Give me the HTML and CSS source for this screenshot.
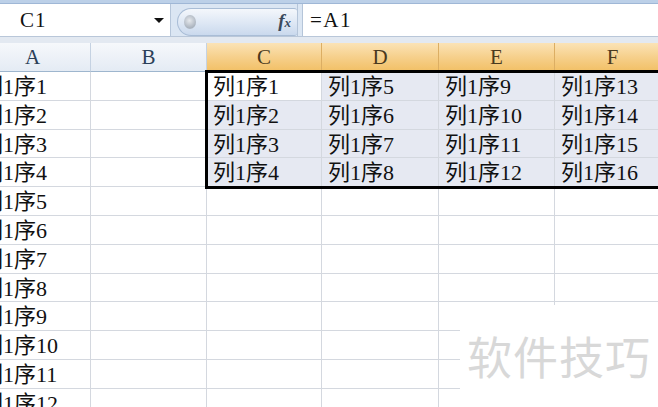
FILE: index.html
```html
<!DOCTYPE html>
<html>
<head>
<meta charset="utf-8">
<link rel="stylesheet" href="styles.css">
</head>
<body>
<div class="app">
  <div class="topstrip"></div>
  <div class="fbar">
    <div class="namebox"><span class="ref">C1</span><span class="arrow"></span></div>
    <div class="caps"><span class="knob"></span><span class="fx">f<span class="x">x</span></span></div>
    <div class="sep"></div>
    <div class="formula">=A1</div>
  </div>
  <div class="band"></div>
  <div class="main">
    <div class="sheet">
      <div class="hdr">A</div><div class="hdr">B</div><div class="hdr sel">C</div><div class="hdr sel">D</div><div class="hdr sel">E</div><div class="hdr sel">F</div>

      <div class="c">列1序1</div><div class="c"></div><div class="c act">列1序1</div><div class="c s">列1序5</div><div class="c s">列1序9</div><div class="c s">列1序13</div>
      <div class="c">列1序2</div><div class="c"></div><div class="c s">列1序2</div><div class="c s">列1序6</div><div class="c s">列1序10</div><div class="c s">列1序14</div>
      <div class="c">列1序3</div><div class="c"></div><div class="c s">列1序3</div><div class="c s">列1序7</div><div class="c s">列1序11</div><div class="c s">列1序15</div>
      <div class="c">列1序4</div><div class="c"></div><div class="c s">列1序4</div><div class="c s">列1序8</div><div class="c s">列1序12</div><div class="c s">列1序16</div>
      <div class="c">列1序5</div><div class="c"></div><div class="c"></div><div class="c"></div><div class="c"></div><div class="c"></div>
      <div class="c">列1序6</div><div class="c"></div><div class="c"></div><div class="c"></div><div class="c"></div><div class="c"></div>
      <div class="c">列1序7</div><div class="c"></div><div class="c"></div><div class="c"></div><div class="c"></div><div class="c"></div>
      <div class="c">列1序8</div><div class="c"></div><div class="c"></div><div class="c"></div><div class="c"></div><div class="c"></div>
      <div class="c">列1序9</div><div class="c"></div><div class="c"></div><div class="c"></div><div class="c"></div><div class="c"></div>
      <div class="c">列1序10</div><div class="c"></div><div class="c"></div><div class="c"></div><div class="c"></div><div class="c"></div>
      <div class="c">列1序11</div><div class="c"></div><div class="c"></div><div class="c"></div><div class="c"></div><div class="c"></div>
      <div class="c">列1序12</div><div class="c"></div><div class="c"></div><div class="c"></div><div class="c"></div><div class="c"></div>
    </div>
    <div class="selbox"></div>
    <div class="watermark">软件技巧</div>
  </div>
</div>
</body>
</html>
```
FILE: styles.css
```css
html, body {
  margin: 0;
  padding: 0;
  background: #ffffff;
}
.app {
  width: 658px;
  height: 407px;
  overflow: hidden;
  position: relative;
}
.topstrip {
  height: 3px;
  background: #bcd0e8;
  border-bottom: 1px solid #9fb7d6;
}
.fbar {
  display: flex;
  align-items: stretch;
  height: 32px;
  background: #dbe6f3;
}
.namebox {
  width: 171px;
  background: #ffffff;
  border-right: 1px solid #b6c6da;
  display: flex;
  align-items: center;
  justify-content: space-between;
  padding: 0 5px 0 20px;
  box-sizing: border-box;
}
.ref, .formula {
  font-family: "Liberation Serif", "DejaVu Serif", serif;
  font-size: 21px;
  color: #111;
  letter-spacing: 1px;
}
.formula {
  letter-spacing: 1.5px;
}
.arrow {
  width: 0;
  height: 0;
  border-left: 5px solid transparent;
  border-right: 5px solid transparent;
  border-top: 5px solid #111;
  margin-right: 1px;
}
.caps {
  margin: 4px 0 0 6px;
  width: 120px;
  height: 28px;
  box-sizing: border-box;
  border-radius: 14px 3px 3px 14px;
  border: 1px solid #a9bdd6;
  border-right: none;
  background: linear-gradient(#f4f7fb, #dde7f4 55%, #cad9ed);
  display: flex;
  align-items: center;
  justify-content: space-between;
  padding: 0 6px 0 6px;
}
.knob {
  width: 12px;
  height: 14px;
  border-radius: 50%;
  background: radial-gradient(circle at 45% 40%, #e6e9ed, #a9b2bd 70%, #c9d3de);
}
.fx {
  font-family: "Liberation Serif", serif;
  font-style: italic;
  font-weight: bold;
  font-size: 19px;
  color: #3c4a5c;
  margin-top: -2px;
}
.fx .x {
  font-size: 13px;
}
.sep {
  width: 4px;
  background: #dbe6f3;
  border-left: 1px solid #b5c5d9;
}
.formula {
  flex: 1;
  background: #ffffff;
  display: flex;
  align-items: center;
  padding-left: 7px;
  border-left: 1px solid #b5c5d9;
}
.band {
  height: 7px;
  background: #e3e9f1;
  border-top: 1px solid #b9c7d9;
  box-sizing: border-box;
}
.main {
  position: relative;
}
.sheet {
  display: grid;
  grid-template-columns: 116px 116px 115px 117px 116px 116px;
  grid-template-rows: 29px repeat(12, 28.8px);
  margin-left: -25px;
}
.hdr {
  box-sizing: border-box;
  border-right: 1px solid #c5d2e2;
  border-bottom: 1px solid #9eb6ce;
  background: linear-gradient(#f6f8fb, #e4ebf4);
  font-family: "Liberation Serif", "DejaVu Serif", serif;
  font-size: 21px;
  color: #2b3f58;
  display: flex;
  align-items: center;
  justify-content: center;
  padding-top: 1px;
}
.hdr.sel {
  background: linear-gradient(#fbe3b6, #f6d08c 50%, #f2c066);
  border-right: 1px solid #dcae63;
  border-bottom: 1px solid #e5983c;
  color: #4a3a1e;
}
.c {
  box-sizing: border-box;
  border-right: 1px solid #d4d8df;
  border-bottom: 1px solid #d4d8df;
  font-family: "Liberation Serif", "Noto Sans CJK SC", serif;
  font-size: 22px;
  line-height: 29px;
  color: #111;
  padding-left: 6px;
  white-space: nowrap;
  overflow: hidden;
}
.c.s {
  background: #e6e9f2;
}
.c.act {
  background: #ffffff;
}
.selbox {
  position: absolute;
  left: 205px;
  top: 27px;
  width: 500px;
  height: 119px;
  box-sizing: border-box;
  border: 3px solid #000;
}
.watermark {
  position: absolute;
  left: 460px;
  top: 262px;
  width: 210px;
  height: 120px;
  background: #ffffff;
  font-family: "Noto Sans CJK SC", sans-serif;
  font-size: 45px;
  color: #d8d8d8;
  padding: 18px 0 0 7px;
  box-sizing: border-box;
  letter-spacing: 1px;
}
```
